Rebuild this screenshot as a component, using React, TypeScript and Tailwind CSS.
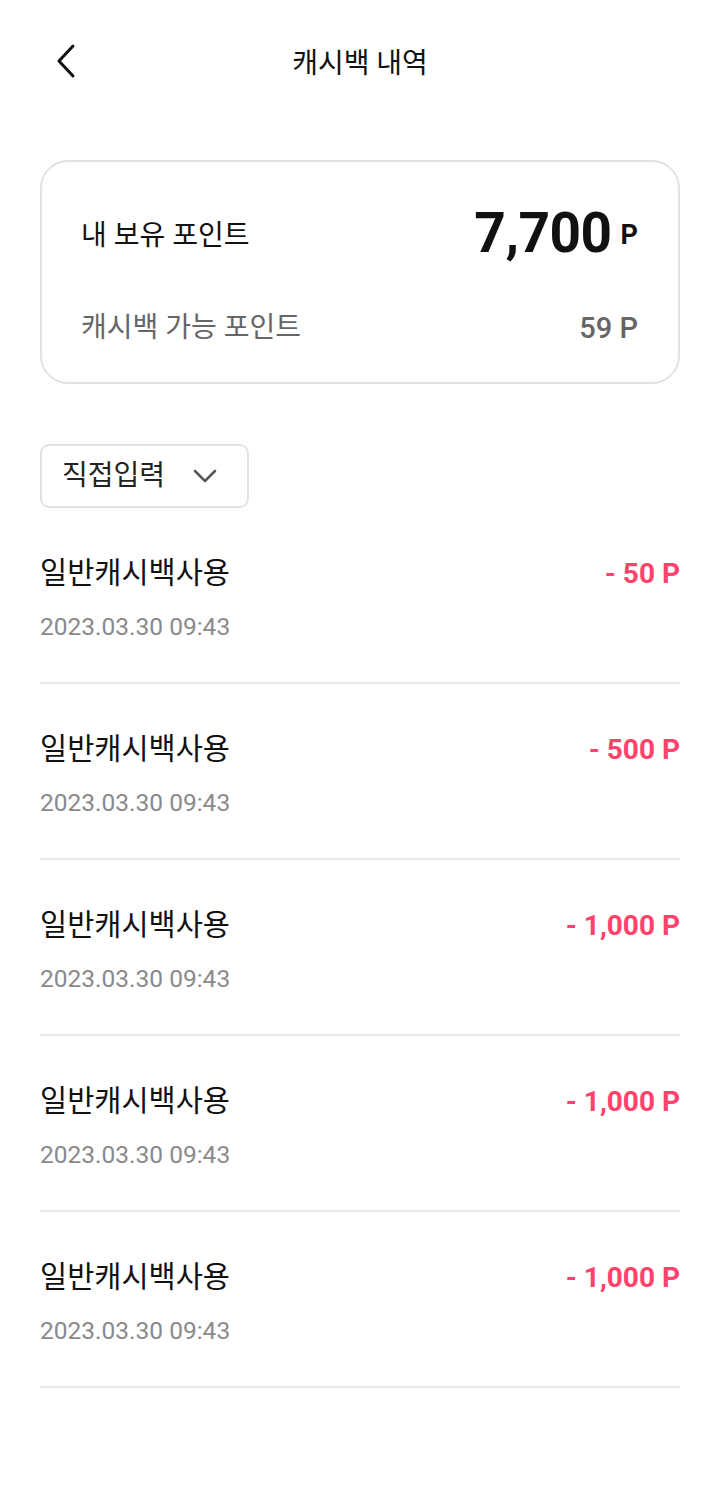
import React from 'react';

const rows = [
  { id: 1, title: '일반캐시백사용', date: '2023.03.30 09:43', amount: '- 50 P' },
  { id: 2, title: '일반캐시백사용', date: '2023.03.30 09:43', amount: '- 500 P' },
  { id: 3, title: '일반캐시백사용', date: '2023.03.30 09:43', amount: '- 1,000 P' },
  { id: 4, title: '일반캐시백사용', date: '2023.03.30 09:43', amount: '- 1,000 P' },
  { id: 5, title: '일반캐시백사용', date: '2023.03.30 09:43', amount: '- 1,000 P' },
];

const App: React.FC = () => {
  return (
    <div className="w-[720px] min-h-[1509px] bg-white font-['Roboto','Noto_Sans_CJK_KR',sans-serif] text-[#111]">
      {/* Header */}
      <header className="relative h-[124px] flex items-center justify-center">
        <button className="absolute left-[50px] top-[41px] w-[32px] h-[40px] flex items-center justify-center">
          <svg width="24" height="36" viewBox="0 0 24 36" fill="none">
            <path d="M19 3 L5 18 L19 33" stroke="#111" strokeWidth="3" strokeLinecap="round" strokeLinejoin="round" />
          </svg>
        </button>
        <h1 className="text-[28px] font-normal leading-none mt-[4px]">캐시백 내역</h1>
      </header>

      <main className="px-[40px]">
        {/* Points card */}
        <section className="mt-[36px] h-[224px] rounded-[28px] border-2 border-[#e2e2e2] pl-[39px] pr-[40px] pt-[14px] flex flex-col justify-center gap-[50px]">
          <div className="flex items-center justify-between h-[48px]">
            <span className="text-[28px] leading-none">내 보유 포인트</span>
            <span className="flex items-center font-bold -mt-[6px]">
              <span className="text-[55px] leading-none tracking-[-0.5px]">7,700</span>
              <span className="text-[27px] leading-none ml-[9px] mt-[4px]">P</span>
            </span>
          </div>
          <div className="flex items-center justify-between h-[36px]">
            <span className="text-[28px] leading-none text-[#666]">캐시백 가능 포인트</span>
            <span className="text-[29px] font-medium leading-none text-[#666]">59 P</span>
          </div>
        </section>

        {/* Filter */}
        <button className="mt-[60px] w-[209px] h-[64px] rounded-[9px] border-2 border-[#e2e2e2] flex items-center pl-[20px] pr-[30px] justify-between">
          <span className="text-[28px] font-normal leading-none text-[#222]">직접입력</span>
          <svg width="24" height="14" viewBox="0 0 24 14" fill="none">
            <path d="M2 2 L12 12 L22 2" stroke="#555" strokeWidth="2.5" strokeLinecap="round" strokeLinejoin="round" />
          </svg>
        </button>

        {/* History list */}
        <ul>
          {rows.map((row) => (
            <li key={row.id} className="border-b-2 border-[#e8e8e8] pt-[48px] pb-[39px]">
              <div className="flex items-center justify-between h-[36px]">
                <span className="text-[29.5px] leading-none">{row.title}</span>
                <span className="text-[28px] font-bold leading-none text-[#ff426b]">{row.amount}</span>
              </div>
              <div className="mt-[19px] h-[32px] flex items-center text-[24.5px] leading-none text-[#8a8a8a]">
                {row.date}
              </div>
            </li>
          ))}
        </ul>
      </main>
    </div>
  );
};

export default App;
